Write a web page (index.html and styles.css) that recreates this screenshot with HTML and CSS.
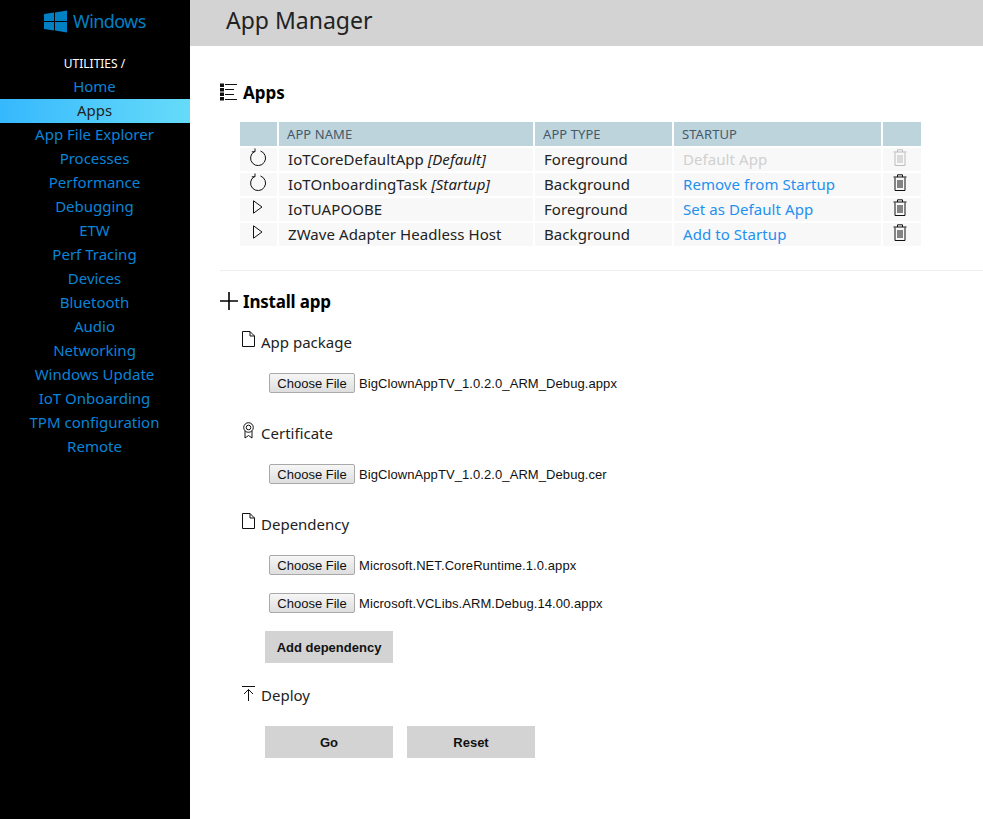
FILE: index.html
```html
<!DOCTYPE html>
<html lang="en">
    <head>
        <meta charset="UTF-8" />
        <meta name="viewport" content="width=device-width, initial-scale=1.0" />
        <title>App Manager</title>

        <link rel="stylesheet" href="styles.css">
    </head>
    <body>
        <nav class="sidebar">
            <div class="logo">
                <svg class="logo-icon" viewBox="0 0 23 23" width="23" height="23">
                    <path d="M0 4 10 2.600V11H0ZM11 2.400 23 .5V11H11ZM0 12H10V20.400L0 19ZM11 12H23V22.500L11 20.600Z" fill="#0080c4" />
                </svg>
                <span>Windows</span>
            </div>
            <div class="nav-title">UTILITIES /</div>
            <a class="nav-item" href="#">Home</a>
            <a class="nav-item active" href="#">Apps</a>
            <a class="nav-item" href="#">App File Explorer</a>
            <a class="nav-item" href="#">Processes</a>
            <a class="nav-item" href="#">Performance</a>
            <a class="nav-item" href="#">Debugging</a>
            <a class="nav-item" href="#">ETW</a>
            <a class="nav-item" href="#">Perf Tracing</a>
            <a class="nav-item" href="#">Devices</a>
            <a class="nav-item" href="#">Bluetooth</a>
            <a class="nav-item" href="#">Audio</a>
            <a class="nav-item" href="#">Networking</a>
            <a class="nav-item" href="#">Windows Update</a>
            <a class="nav-item" href="#">IoT Onboarding</a>
            <a class="nav-item" href="#">TPM configuration</a>
            <a class="nav-item" href="#">Remote</a>
        </nav>

        <div class="page">
            <header class="topbar"><h1>App Manager</h1></header>

            <main class="content">
                <h2 class="section-title apps-title">
                    <svg viewBox="0 0 17 18" width="17" height="18" fill="none" stroke="#111" stroke-width="1">
                        <path d="M5 1.500H17M5 6.500H14M5 11.500H14M5 16.500H17" />
                        <path d="M2 .5V17.500" stroke-width="4" stroke-dasharray="3.500 1" />
                    </svg>
                    Apps
                </h2>

                <table class="apps-table">
                    <thead>
                        <tr>
                            <th class="col-icon"></th>
                            <th class="col-name">APP NAME</th>
                            <th class="col-type">APP TYPE</th>
                            <th class="col-startup">STARTUP</th>
                            <th class="col-del"></th>
                        </tr>
                    </thead>
                    <tbody>
                        <tr>
                            <td class="cell-icon">
                                <svg class="icon-restart" viewBox="0 0 18 18" width="18" height="18"><path d="M5.500 3.500A7.500 7.500 0 1 0 11.500 3M6 .5V3.800H2.800" /></svg>
                            </td>
                            <td>IoTCoreDefaultApp <em>[Default]</em></td>
                            <td>Foreground</td>
                            <td class="link-disabled">Default App</td>
                            <td class="cell-del disabled">
                                <svg class="icon-trash" viewBox="0 0 14 17" width="14" height="17"><path d="M2 3.500V16.500H12V3.500M.5 3H13.500M4.500 3V.8H9.500V3M5 6V14M7 6V14M9 6V14" /></svg>
                            </td>
                        </tr>
                        <tr>
                            <td class="cell-icon">
                                <svg class="icon-restart" viewBox="0 0 18 18" width="18" height="18"><path d="M5.500 3.500A7.500 7.500 0 1 0 11.500 3M6 .5V3.800H2.800" /></svg>
                            </td>
                            <td>IoTOnboardingTask <em>[Startup]</em></td>
                            <td>Background</td>
                            <td><a href="#">Remove from Startup</a></td>
                            <td class="cell-del">
                                <svg class="icon-trash" viewBox="0 0 14 17" width="14" height="17"><path d="M2 3.500V16.500H12V3.500M.5 3H13.500M4.500 3V.8H9.500V3M5 6V14M7 6V14M9 6V14" /></svg>
                            </td>
                        </tr>
                        <tr>
                            <td class="cell-icon cell-play">
                                <svg class="icon-play" viewBox="0 0 10 14" width="10" height="14"><path d="M.5 .8 9 7 .5 13.200Z" /></svg>
                            </td>
                            <td>IoTUAPOOBE</td>
                            <td>Foreground</td>
                            <td><a href="#">Set as Default App</a></td>
                            <td class="cell-del">
                                <svg class="icon-trash" viewBox="0 0 14 17" width="14" height="17"><path d="M2 3.500V16.500H12V3.500M.5 3H13.500M4.500 3V.8H9.500V3M5 6V14M7 6V14M9 6V14" /></svg>
                            </td>
                        </tr>
                        <tr>
                            <td class="cell-icon cell-play">
                                <svg class="icon-play" viewBox="0 0 10 14" width="10" height="14"><path d="M.5 .8 9 7 .5 13.200Z" /></svg>
                            </td>
                            <td>ZWave Adapter Headless Host</td>
                            <td>Background</td>
                            <td><a href="#">Add to Startup</a></td>
                            <td class="cell-del">
                                <svg class="icon-trash" viewBox="0 0 14 17" width="14" height="17"><path d="M2 3.500V16.500H12V3.500M.5 3H13.500M4.500 3V.8H9.500V3M5 6V14M7 6V14M9 6V14" /></svg>
                            </td>
                        </tr>
                    </tbody>
                </table>

                <hr class="divider" />

                <h2 class="section-title install-title">
                    <svg viewBox="0 0 18 18" width="18" height="18" fill="none" stroke="#000" stroke-width="1.600"><path d="M9 0V18M0 9H18" /></svg>
                    Install app
                </h2>

                <div class="form-block">
                    <h3 class="field-title">
                        <svg class="icon-file" viewBox="0 0 13 16" width="13" height="16"><path d="M.5 .5H8L12.500 5V15.500H.5ZM8 .5V5H12.500" /></svg>
                        App package
                    </h3>
                    <div class="file-row">
                        <button class="file-btn">Choose File</button>
                        <span class="file-name">BigClownAppTV_1.0.2.0_ARM_Debug.appx</span>
                    </div>

                    <h3 class="field-title next-field">
                        <svg class="icon-cert" viewBox="0 0 13 17" width="13" height="17"><circle cx="6.500" cy="5.500" r="4.800" /><circle cx="6.500" cy="5.500" r="2.300" /><path d="M3 9V16L6.500 13.500 10 16V9" /></svg>
                        Certificate
                    </h3>
                    <div class="file-row">
                        <button class="file-btn">Choose File</button>
                        <span class="file-name">BigClownAppTV_1.0.2.0_ARM_Debug.cer</span>
                    </div>

                    <h3 class="field-title next-field">
                        <svg class="icon-file" viewBox="0 0 13 16" width="13" height="16"><path d="M.5 .5H8L12.500 5V15.500H.5ZM8 .5V5H12.500" /></svg>
                        Dependency
                    </h3>
                    <div class="file-row">
                        <button class="file-btn">Choose File</button>
                        <span class="file-name">Microsoft.NET.CoreRuntime.1.0.appx</span>
                    </div>
                    <div class="file-row second-row">
                        <button class="file-btn">Choose File</button>
                        <span class="file-name">Microsoft.VCLibs.ARM.Debug.14.00.appx</span>
                    </div>
                    <div class="actions add-row">
                        <button class="action-btn">Add dependency</button>
                    </div>

                    <h3 class="field-title deploy-title">
                        <svg class="icon-deploy" viewBox="0 0 13 15" width="13" height="15"><path d="M0 .5H13M6.500 15V3.500M2 8 6.500 3.500 11 8" /></svg>
                        Deploy
                    </h3>
                    <div class="actions deploy-row">
                        <button class="action-btn">Go</button>
                        <button class="action-btn">Reset</button>
                    </div>
                </div>
            </main>
        </div>
    </body>
</html>
```

FILE: styles.css
```css
html,
body {
    height: 100%;
}

body {
    margin: 0;
    display: flex;
    font-family: "Noto Sans", "Open Sans", sans-serif;
    background-color: #fff;
    color: #222;
    overflow: hidden;
}

a {
    text-decoration: none;
}

/* left menu */
.sidebar {
    flex: 0 0 190px;
    height: 819px;
    background-color: #000;
    text-align: center;
}

.logo {
    display: flex;
    align-items: center;
    gap: 6px;
    height: 42px;
    padding-left: 44px;
    color: #0080c4;
    font-size: 18px;
    letter-spacing: -0.6px;
}

.nav-title {
    margin-top: 11px;
    padding-right: 1px;
    height: 22px;
    line-height: 22px;
    color: #fff;
    font-size: 12px;
}

.nav-item {
    display: block;
    padding-right: 1px;
    height: 24px;
    line-height: 22px;
    color: #0a84d6;
    font-size: 15px;
    white-space: nowrap;
}

.nav-item.active {
    background: linear-gradient(to right, #36b8fd, #66dbf9);
    color: #222;
}

/* top bar */
.page {
    flex: 1;
    min-width: 0;
}

.topbar {
    height: 46px;
    background-color: #d3d3d3;
    padding-left: 36px;
}

.topbar h1 {
    margin: 0;
    font-size: 23px;
    font-weight: 400;
    line-height: 40px;
    color: #222;
}

.content {
    padding-left: 30px;
}

.section-title {
    display: flex;
    align-items: center;
    gap: 6px;
    margin: 0;
    font-size: 17px;
    color: #000;
}

.apps-title {
    margin-top: 34px;
    height: 24px;
}

.install-title {
    gap: 5px;
    margin-top: 18px;
    height: 24px;
    letter-spacing: -0.2px;
}

.apps-table {
    margin: 18px 0 0 20px;
    width: 681px;
    table-layout: fixed;
    border-collapse: separate;
    border-spacing: 0;
    font-size: 15px;
    letter-spacing: 0.07px;
}

.apps-table th {
    box-sizing: border-box;
    height: 24px;
    padding: 0 0 0 8px;
    background-color: #bdd4dd;
    border-right: 2px solid #fff;
    font-size: 13px;
    font-weight: 400;
    text-align: left;
    color: #45596a;
}

.apps-table th:last-child {
    border-right: 0;
}

.apps-table td {
    box-sizing: border-box;
    height: 25px;
    padding: 0 0 2px 9px;
    background-color: #f8f8f8;
    border-right: 2px solid #fff;
    border-top: 2px solid #fff;
    color: #222;
    white-space: nowrap;
}

.apps-table td:last-child {
    border-right: 0;
}

.col-icon {
    width: 39px;
}

.col-name {
    width: 256px;
}

.col-type {
    width: 139px;
}

.col-startup {
    width: 209px;
}

.apps-table a {
    color: #1e90f0;
}

.apps-table .link-disabled {
    color: #d0d0d0;
}

.apps-table .cell-icon,
.apps-table .cell-del {
    vertical-align: top;
}

.apps-table .cell-icon {
    padding: 0 2px 0 0;
}

.apps-table .cell-del {
    padding: 1px 5px 0 0;
}

.apps-table .cell-play {
    padding: 2px 2px 0 0;
}

.cell-icon svg,
.cell-del svg {
    display: block;
    margin: 0 auto;
}

.cell-del.disabled svg {
    opacity: 0.25;
}

svg {
    flex: none;
}

.icon-restart,
.icon-play,
.icon-trash,
.icon-file,
.icon-cert,
.icon-deploy {
    fill: none;
    stroke: #111;
    stroke-width: 1;
}

.icon-file,
.icon-cert {
    margin-top: -6px;
}

.icon-deploy {
    margin-top: -4px;
}

.divider {
    height: 1px;
    margin: 24px 0 0 0;
    border: 0;
    background-color: #eee;
}

/* install form */
.form-block {
    padding-left: 22px;
}

.field-title {
    display: flex;
    align-items: center;
    gap: 6px;
    margin: 17px 0 0 0;
    height: 24px;
    font-size: 15px;
    font-weight: 400;
    color: #222;
}

.field-title.next-field {
    margin-top: 28px;
}

.field-title.deploy-title {
    margin-top: 20px;
}

.file-row {
    display: flex;
    align-items: center;
    gap: 4px;
    margin: 19px 0 0 27px;
    height: 20px;
}

.file-row.second-row {
    margin-top: 18px;
}

.file-btn {
    width: 86px;
    height: 20px;
    padding: 0;
    background: linear-gradient(#f6f6f6, #dedede);
    border: 1px solid #a9a9a9;
    border-radius: 2px;
    font-family: "Liberation Sans", Arial, sans-serif;
    font-size: 13px;
    color: #111;
}

.file-name {
    font-family: "Liberation Sans", Arial, sans-serif;
    font-size: 13px;
    letter-spacing: 0.08px;
    color: #111;
}

.actions {
    display: flex;
    gap: 14px;
    margin-left: 23px;
}

.add-row {
    margin-top: 18px;
}

.deploy-row {
    margin-top: 19px;
}

.action-btn {
    width: 128px;
    height: 32px;
    padding: 0;
    background-color: #d3d3d3;
    border: 0;
    font-family: "Liberation Sans", Arial, sans-serif;
    font-size: 13px;
    font-weight: 700;
    color: #111;
}
```
